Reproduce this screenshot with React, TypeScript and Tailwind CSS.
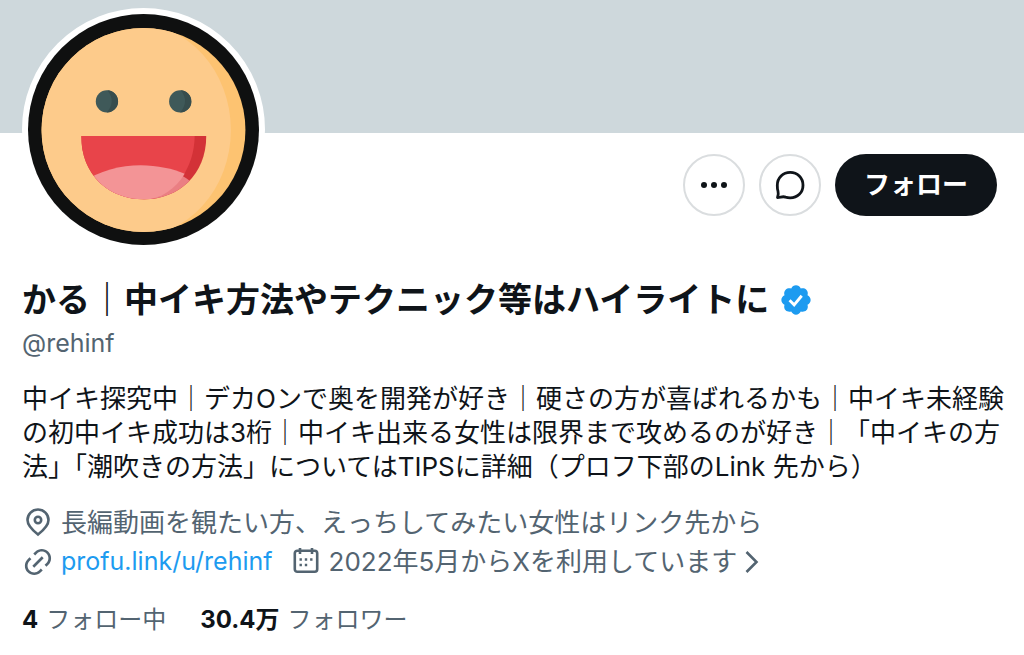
const Avatar = () => {
    return (
        <svg viewBox="0 0 230 230" className="block w-full" role="img" aria-label="かる">
            <defs>
                <clipPath id="face">
                    <circle cx="115" cy="115.500" r="101.500" />
                </clipPath>
                <clipPath id="mouth">
                    <path d="M53 121.500H177.500C177.500 160 150 184.500 115.500 184.500C80 184.500 53 160 53 121.500Z" />
                </clipPath>
            </defs>
            <circle cx="115" cy="115" r="115" fill="#0f1010" />
            <g clipPath="url(#face)">
                <rect width="230" height="230" fill="#fdc371" />
                <ellipse cx="105" cy="115.500" rx="97" ry="107" fill="#fdcb8b" />
            </g>
            <circle cx="78.500" cy="87" r="11" fill="#3f5959" />
            <path d="M78.500 98Q88 87 79 76A11 11 0 0 1 78.500 98Z" fill="#374d4d" />
            <circle cx="151.500" cy="87" r="11" fill="#3f5959" />
            <path d="M151.500 98Q161 87 152 76A11 11 0 0 1 151.500 98Z" fill="#374d4d" />
            <g clipPath="url(#mouth)">
                <rect x="50" y="120" width="130" height="67" fill="#d33237" />
                <path d="M50 120H166C166 156 144 182 115 187H50Z" fill="#e8444a" />
                <ellipse cx="115.500" cy="192" rx="60" ry="40" fill="#ea7f83" />
                <path d="M50 171C84 144 130 148 156 159C147 174 133 184 115 185L50 187Z" fill="#f39496" />
            </g>
        </svg>
    )
}

const VerifiedIcon = () => {
    return (
        <svg viewBox="1.5 1.500 21 21" className="size-[30px] shrink-0" role="img" aria-label="認証済みアカウント">
            <path fill="#1d9bf0" d="M22.250 12c0-1.430-.880-2.670-2.190-3.340.460-1.390.200-2.900-.810-3.910s-2.520-1.270-3.910-.810c-.660-1.310-1.910-2.190-3.340-2.190s-2.670.880-3.330 2.190c-1.400-.460-2.910-.200-3.920.810s-1.260 2.520-.800 3.910c-1.310.670-2.200 1.910-2.200 3.340s.890 2.670 2.200 3.340c-.460 1.390-.210 2.900.800 3.910s2.520 1.260 3.910.810c.670 1.310 1.910 2.190 3.340 2.190s2.680-.880 3.340-2.190c1.390.450 2.900.200 3.910-.810s1.270-2.520.810-3.910c1.310-.670 2.190-1.910 2.190-3.340z" />
            <path fill="none" stroke="#fff" strokeWidth="2" d="M7.500 12.200l3.200 3.200 5.300-6.400" />
        </svg>
    )
}

const App = () => {
    return (
        <main className="min-h-screen bg-white font-['Inter','Noto_Sans_CJK_JP',sans-serif] text-[26px] leading-[34px] text-[#0f1419] antialiased">
            <div className="h-[133px] bg-[#ced8dc]"></div>
            <div className="pl-[22px] pr-[27px]">
                <div className="flex items-start justify-between">
                    <div className="-mt-[125px] w-[243px] rounded-full border-[6px] border-white bg-white">
                        <Avatar />
                    </div>
                    <div className="mt-[21px] flex gap-[14px]">
                        <button type="button" aria-label="もっと見る" className="flex size-[62px] items-center justify-center rounded-full border-2 border-[#dadddf]">
                            <svg viewBox="0 0 30 30" className="size-[30px]" fill="currentColor">
                                <circle cx="5" cy="15" r="3" />
                                <circle cx="15" cy="15" r="3" />
                                <circle cx="25" cy="15" r="3" />
                            </svg>
                        </button>
                        <button type="button" aria-label="メッセージ" className="flex size-[62px] items-center justify-center rounded-full border-2 border-[#dadddf]">
                            <svg viewBox="0 0 32 32" className="size-8" fill="none" stroke="currentColor" strokeWidth="2.800" strokeLinejoin="round">
                                <path d="M3.500 28.500C4.500 26 4.500 24 4 22.300C3.300 20.400 3.300 18.500 3.300 16.200C3.300 8.800 9 3.300 16.200 3.300S29 8.800 29 16.200S23.500 28.800 16.200 28.800C14.500 28.800 13 28.600 11.500 28.100C9 27.100 7 28.300 3.500 28.500Z" />
                            </svg>
                        </button>
                        <button type="button" className="h-[62px] w-[162px] rounded-full bg-[#0f1419] font-bold text-white">フォロー</button>
                    </div>
                </div>

                <div className="mt-[29px] flex items-center gap-3">
                    <h1 className="text-[34px] font-bold leading-10 whitespace-nowrap">かる｜中イキ方法やテクニック等はハイライトに</h1>
                    <VerifiedIcon />
                </div>
                <p className="mt-[6px] text-[25px] text-[#536471]">@rehinf</p>

                <p className="mt-[22px] whitespace-nowrap">
                    中イキ探究中｜デカOンで奥を開発が好き｜硬さの方が喜ばれるかも｜中イキ未経験<br />
                    の初中イキ成功は3桁｜中イキ出来る女性は限界まで攻めるのが好き｜「中イキの方<br />
                    法」「潮吹きの方法」についてはTIPSに詳細（プロフ下部のLink 先から）
                </p>

                <div className="mt-[19px] leading-[39px] text-[#536471]">
                    <div className="flex items-center gap-[7px]">
                        <svg viewBox="0 0 32 32" className="size-8 shrink-0" fill="none" stroke="currentColor" strokeWidth="2.600">
                            <path d="M16 27.500C11.500 24 5.500 19 5.500 13A10.500 10.500 0 0 1 26.500 13C26.500 19 20.500 24 16 27.500Z" />
                            <circle cx="16" cy="13" r="3.200" />
                        </svg>
                        <span>長編動画を観たい方、えっちしてみたい女性はリンク先から</span>
                    </div>
                    <div className="flex items-center">
                        <svg viewBox="0 0 24 24" className="mr-[7px] size-8 shrink-0" fill="currentColor">
                            <path d="M18.360 5.640c-1.950-1.960-5.110-1.960-7.070 0L9.880 7.050 8.460 5.640l1.420-1.420c2.730-2.730 7.160-2.730 9.900 0 2.730 2.740 2.730 7.170 0 9.900l-1.420 1.420-1.410-1.420 1.410-1.410c1.960-1.960 1.960-5.120 0-7.070zm-2.120 3.530l-7.070 7.070-1.410-1.410 7.070-7.070 1.410 1.410zm-12.020.710l1.420-1.420 1.410 1.420-1.410 1.410c-1.960 1.960-1.960 5.120 0 7.070 1.950 1.960 5.110 1.960 7.070 0l1.410-1.410 1.420 1.410-1.420 1.420c-2.730 2.730-7.160 2.730-9.900 0-2.730-2.740-2.730-7.170 0-9.900z" />
                        </svg>
                        <a href="#" className="text-[25px] text-[#1d9bf0]">profu.link/u/rehinf</a>
                        <svg viewBox="0 0 32 32" className="mr-[7px] ml-[17px] size-8 shrink-0" fill="none" stroke="currentColor" strokeWidth="2.600">
                            <rect x="4.800" y="4.800" width="22.400" height="21" rx="2.500" />
                            <path d="M10 2v6M22 2v6" />
                            <path d="M9.500 13.500h2.400M14.800 13.500h2.400M20.100 13.500h2.400M9.500 19h2.400M14.800 19h2.400" />
                        </svg>
                        <a href="#" className="flex items-center gap-[7px]">
                            2022年5月からXを利用しています
                            <svg viewBox="0 0 16 26" className="h-[26px] w-4" fill="none" stroke="currentColor" strokeWidth="2.600">
                                <path d="M2.500 3L12.500 13L2.500 23" />
                            </svg>
                        </a>
                    </div>
                </div>

                <div className="mt-[22px] flex gap-[34px] text-2xl leading-[34px] text-[#536471]">
                    <a href="#" className="flex gap-2"><b className="text-[#0f1419]">4</b>フォロー中</a>
                    <a href="#" className="flex gap-2"><b className="text-[#0f1419]">30.4万</b>フォロワー</a>
                </div>
            </div>
        </main>
    )
}

export default App;
